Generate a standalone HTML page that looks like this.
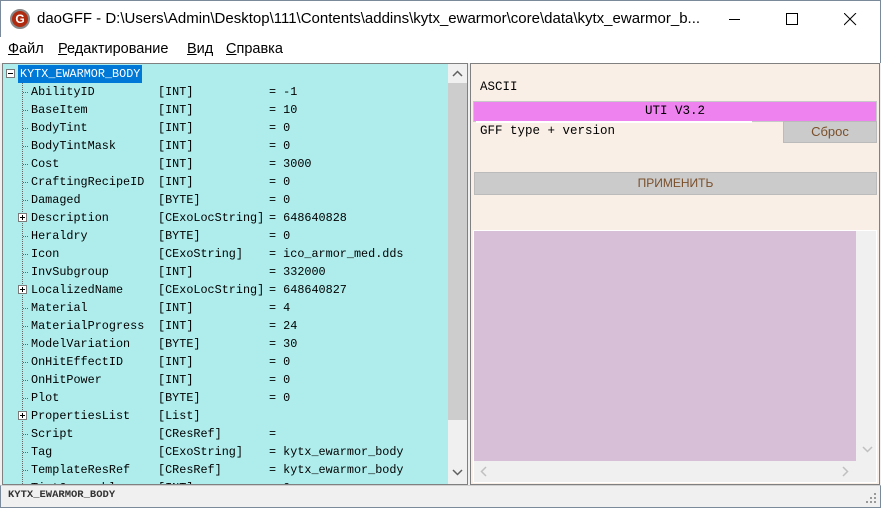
<!DOCTYPE html>
<html><head><meta charset="utf-8"><style>
*{margin:0;padding:0;box-sizing:border-box}
body{width:881px;height:508px;overflow:hidden;background:#f0f0f0;font-family:"Liberation Sans",sans-serif;position:relative}
.abs{position:absolute}
#title{left:0;top:0;width:881px;height:37px;background:#fff;border:1px solid #7a8a9a;border-bottom:none}
#menu{left:0;top:37px;width:881px;height:26px;background:#fff;font-size:14.5px;border-right:1px solid #7a8a9a}
#menu span{position:absolute;top:4px}
#tree{left:3px;top:64px;width:445px;height:420px;background:#afeded;overflow:hidden;font-family:"Liberation Mono",monospace;font-size:11.8px;color:#000}
.row{position:absolute;height:18px;line-height:18px;white-space:pre}
.pl{position:absolute;width:9px;height:9px;border:1px solid #7a7a7a;background:#fff;font-size:0}
.pl:before{content:"";position:absolute;left:1px;top:3px;width:5px;height:1px;background:#000}
.pl.p:after{content:"";position:absolute;left:3px;top:1px;width:1px;height:5px;background:#000}
.dot{position:absolute;border-left:1px dotted #666}
.hd{position:absolute;border-top:1px dotted #666;width:5px}
</style></head><body>
<div id="title" class="abs">
 <div class="abs" style="left:9px;top:8px;width:20px;height:20px;border-radius:50%;background:#b02a10;border:2px solid #888;color:#fff;font-weight:bold;font-size:12px;text-align:center;line-height:16px">G</div>
 <div class="abs" style="left:36px;top:9px;font-size:15px;color:#000;white-space:nowrap">daoGFF - D:\Users\Admin\Desktop\111\Contents\addins\kytx_ewarmor\core\data\kytx_ewarmor_b...</div>
 <div class="abs" style="left:728px;top:18px;width:11px;height:1px;background:#000"></div>
 <div class="abs" style="left:785px;top:12px;width:12px;height:12px;border:1px solid #000"></div>
 <svg class="abs" style="left:843px;top:12px" width="13" height="13"><path d="M0 0L12 12M12 0L0 12" stroke="#000" stroke-width="1"/></svg>
</div>
<div id="menu" class="abs">
 <span style="left:8px"><u>Ф</u>айл</span><span style="left:58px"><u>Р</u>едактирование</span><span style="left:187px"><u>В</u>ид</span><span style="left:226px"><u>С</u>правка</span>
</div>
<div class="abs" style="left:2px;top:63px;width:466px;height:422px;border:1px solid #808080"></div>
<div id="tree" class="abs">
 <div class="dot" style="left:19px;top:18px;height:410px"></div>
 <div class="pl" style="left:3px;top:5px"></div>
 <div class="row" style="left:15px;top:1px;background:#0078d7;color:#fff;padding:0 2px">KYTX_EWARMOR_BODY</div>
 <div id="rows"></div>
</div>
<div class="abs" style="left:448px;top:64px;width:19px;height:420px;background:#f0f0f0"></div>
<div class="abs" style="left:448px;top:83px;width:19px;height:337px;background:#cdcdcd"></div>
<svg class="abs" style="left:452px;top:70px" width="11" height="7"><path d="M1 6L5.5 1.5L10 6" stroke="#606060" stroke-width="1.5" fill="none"/></svg>
<svg class="abs" style="left:452px;top:469px" width="11" height="7"><path d="M1 1L5.5 5.5L10 1" stroke="#606060" stroke-width="1.5" fill="none"/></svg>

<div class="abs" style="left:470px;top:63px;width:410px;height:422px;border:1px solid #808080;background:#faefe6"></div>
<div class="abs" style="left:480px;top:80px;font-family:'Liberation Mono',monospace;font-size:12.5px">ASCII</div>
<div class="abs" style="left:473px;top:101px;width:404px;height:21px;background:#ee82ee;border:1px solid #c8c8c8;text-align:center;font-family:'Liberation Mono',monospace;font-size:12.5px;line-height:19px">UTI V3.2</div>
<div class="abs" style="left:476px;top:121px;width:276px;height:2px;background:#fff"></div>
<div class="abs" style="left:480px;top:124px;font-family:'Liberation Mono',monospace;font-size:12.5px">GFF type + version</div>
<div class="abs" style="left:783px;top:121px;width:94px;height:22px;background:#cbcbcb;border:1px solid #bbb;color:#7a4f2a;font-size:13px;text-align:center;line-height:20px">Сброс</div>
<div class="abs" style="left:474px;top:172px;width:403px;height:23px;background:#cbcbcb;border:1px solid #bbb;color:#7a4f2a;font-size:12px;text-align:center;line-height:21px">ПРИМЕНИТЬ</div>
<div class="abs" style="left:473px;top:230px;width:404px;height:253px;background:#f0f0f0;border:1px solid #fff"></div>
<div class="abs" style="left:474px;top:231px;width:382px;height:230px;background:#d8bfd8"></div>
<svg class="abs" style="left:862px;top:446px" width="11" height="7"><path d="M1 1L5.5 5.5L10 1" stroke="#c0c0c0" stroke-width="1.5" fill="none"/></svg>
<svg class="abs" style="left:480px;top:466px" width="7" height="11"><path d="M6 1L1.5 5.5L6 10" stroke="#c0c0c0" stroke-width="1.5" fill="none"/></svg>
<svg class="abs" style="left:842px;top:466px" width="7" height="11"><path d="M1 1L5.5 5.5L1 10" stroke="#c0c0c0" stroke-width="1.5" fill="none"/></svg>

<div class="abs" style="left:0;top:485px;width:881px;height:23px;background:#f0f0f0;border:1px solid #7a8a9a;border-top:1px solid #d0d0d0"></div>
<div class="abs" style="left:8px;top:489px;font-family:'Liberation Mono',monospace;font-size:10.5px;font-weight:bold;color:#333">KYTX_EWARMOR_BODY</div>
<svg class="abs" style="left:866px;top:493px" width="11" height="11" fill="#999"><rect x="8" y="0" width="2" height="2"/><rect x="4" y="4" width="2" height="2"/><rect x="8" y="4" width="2" height="2"/><rect x="0" y="8" width="2" height="2"/><rect x="4" y="8" width="2" height="2"/><rect x="8" y="8" width="2" height="2"/></svg>
<script>
var d=[["AbilityID","[INT]","= -1"],["BaseItem","[INT]","= 10"],["BodyTint","[INT]","= 0"],["BodyTintMask","[INT]","= 0"],["Cost","[INT]","= 3000"],["CraftingRecipeID","[INT]","= 0"],["Damaged","[BYTE]","= 0"],["Description","[CExoLocString]","= 648640828",1],["Heraldry","[BYTE]","= 0"],["Icon","[CExoString]","= ico_armor_med.dds"],["InvSubgroup","[INT]","= 332000"],["LocalizedName","[CExoLocString]","= 648640827",1],["Material","[INT]","= 4"],["MaterialProgress","[INT]","= 24"],["ModelVariation","[BYTE]","= 30"],["OnHitEffectID","[INT]","= 0"],["OnHitPower","[INT]","= 0"],["Plot","[BYTE]","= 0"],["PropertiesList","[List]","",1],["Script","[CResRef]","="],["Tag","[CExoString]","= kytx_ewarmor_body"],["TemplateResRef","[CResRef]","= kytx_ewarmor_body"],["TintCasseable","[INT]","= 0"]];
var h="";d.forEach(function(r,i){var y=19+i*18;
if(r[3])h+='<div class="pl p" style="left:15px;top:'+(y+4)+'px"></div>';else h+='<div class="hd" style="left:20px;top:'+(y+9)+'px"></div>';
h+='<div class="row" style="left:28px;top:'+y+'px">'+r[0]+'</div><div class="row" style="left:155px;top:'+y+'px">'+r[1]+'</div><div class="row" style="left:266px;top:'+y+'px">'+r[2]+'</div>';});
document.getElementById("rows").outerHTML=h;
</script>
</body></html>
